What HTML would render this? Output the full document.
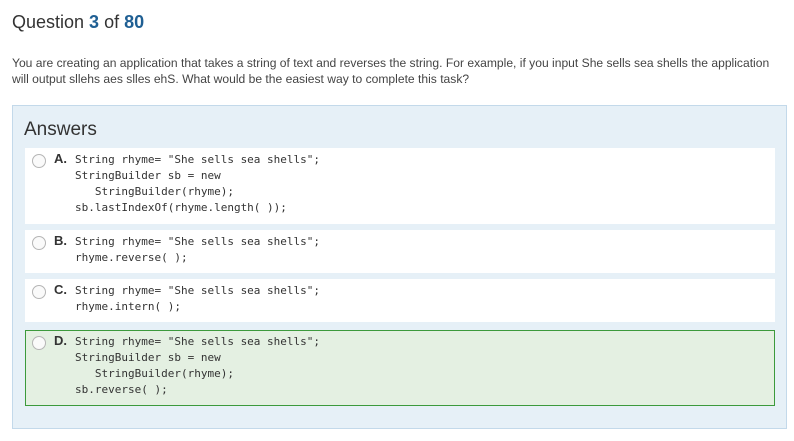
<!DOCTYPE html>
<html><head><style>
body{margin:0;width:794px;height:441px;background:#fff;position:relative;font-family:"Liberation Sans",sans-serif;overflow:hidden}
.a{position:absolute}
h1{position:absolute;left:12px;top:12px;margin:0;font-weight:normal;font-size:18px;color:#333}
h1 b{color:#1f5f93;font-weight:bold}
.q{left:12px;top:55px;font-size:12.1px;line-height:16px;color:#444;white-space:nowrap}
.panel{left:12px;top:105px;width:773px;height:322px;background:#e6f0f7;border:1px solid #c3d9ea}
.ans{left:24px;top:119px;font-size:19px;color:#333}
.box{position:absolute;left:25px;width:750px;background:#fff}
.r{position:absolute;left:7px;top:6px;width:12px;height:12px;border:1px solid #b5b5b5;border-radius:50%;background:#fafafa}
.l{position:absolute;left:29px;top:3px;font-size:13px;font-weight:bold;color:#333}
pre{position:absolute;left:50px;top:4px;margin:0;font-family:"DejaVu Sans Mono","Liberation Mono",monospace;font-size:11px;line-height:16px;color:#333}
</style></head><body>
<h1>Question <b>3</b> of <b>80</b></h1>
<div class="a q">You are creating an application that takes a string of text and reverses the string. For example, if you input She sells sea shells the application<br>will output sllehs aes slles ehS. What would be the easiest way to complete this task?</div>
<div class="a panel"></div>
<div class="a ans">Answers</div>
<div class="box" style="top:148px;height:76px"><div class="r"></div><div class="l">A.</div><pre>String rhyme= "She sells sea shells";
StringBuilder sb = new
   StringBuilder(rhyme);
sb.lastIndexOf(rhyme.length( ));</pre></div>
<div class="box" style="top:230px;height:43px"><div class="r"></div><div class="l">B.</div><pre>String rhyme= "She sells sea shells";
rhyme.reverse( );</pre></div>
<div class="box" style="top:279px;height:43px"><div class="r"></div><div class="l">C.</div><pre>String rhyme= "She sells sea shells";
rhyme.intern( );</pre></div>
<div class="box" style="top:330px;height:74px;background:#e4f0e2;border:1px solid #3c9a3c;left:25px;width:748px"><div class="r" style="left:6px;top:5px"></div><div class="l" style="left:28px;top:2px">D.</div><pre style="left:49px;top:3px">String rhyme= "She sells sea shells";
StringBuilder sb = new
   StringBuilder(rhyme);
sb.reverse( );</pre></div>
</body></html>
